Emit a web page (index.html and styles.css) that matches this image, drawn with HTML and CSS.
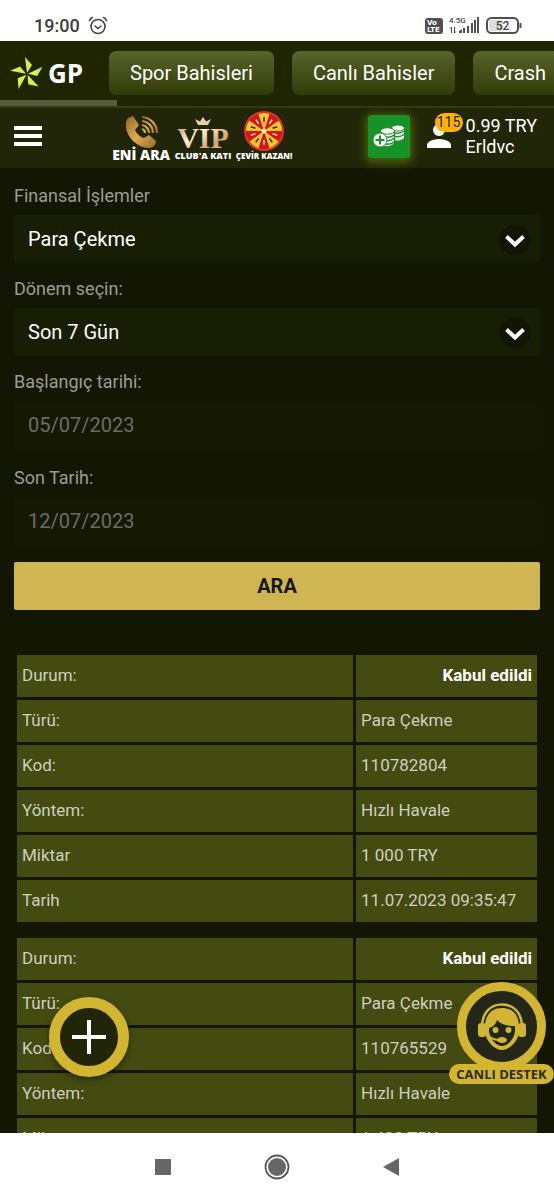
FILE: index.html
```html
<!DOCTYPE html>
<html lang="tr">
<head>
  <meta charset="UTF-8">
  <meta name="viewport" content="width=device-width, initial-scale=1.0">
  <title>Finansal İşlemler</title>
  <link rel="stylesheet" href="styles.css">
</head>
<body>
  <div class="status">
    <span class="clock">19:00</span>
    <svg width="20" height="20" viewBox="0 0 20 20" fill="none" stroke="#444" stroke-width="1.6" stroke-linecap="round">
      <circle cx="10" cy="10.500" r="7"/>
      <path d="M7 10l3 2.500 3-2.500M1.500 4.500C2 3 3 2 4.500 1.500M18.500 4.500C18 3 17 2 15.500 1.500"/>
    </svg>
    <div class="status-right">
      <svg width="18" height="16" viewBox="0 0 18 16">
        <rect width="18" height="16" rx="3" fill="#505050"/>
        <text x="2" y="7" class="volte">Vo</text>
        <text x="2" y="14" class="volte">LTE</text>
      </svg>
      <svg width="31" height="18" viewBox="0 0 31 18">
        <text x="0" y="6" class="net">4.5G</text>
        <path d="M2.500 10v6M1 11.500L2.500 10M5.500 10v6M7 14.500L5.500 16" stroke="#444" fill="none"/>
        <path d="M10 16v-2l3-2v4zM14 11h2v5h-2zM18 9h2v7h-2zM22 6h2v10h-2zM25 3h2v13h-2zM28 0h2v16h-2z" fill="#505050"/>
      </svg>
      <svg width="36" height="17" viewBox="0 0 36 17">
        <rect x="1" y="1" width="31" height="15" rx="4.500" fill="#fff" stroke="#505050" stroke-width="2"/>
        <path d="M5 3h12v11H5a2 2 0 0 1-2-2V5a2 2 0 0 1 2-2z" fill="#ddd"/>
        <path d="M34.500 6v5" stroke="#505050" stroke-width="2"/>
        <text x="16.500" y="13" text-anchor="middle" class="battery">52</text>
      </svg>
    </div>
  </div>

  <header>
    <div class="topbar">
      <a href="#" class="logo">
        <svg width="34" height="34" viewBox="0 0 34 34">
          <defs><path id="blade" d="M17 17L15 1l7 8z"/></defs>
          <g fill="#d8ee4c">
            <use href="#blade"/>
            <use href="#blade" transform="rotate(72 17 18)"/>
            <use href="#blade" transform="rotate(144 17 18)"/>
            <use href="#blade" transform="rotate(216 17 18)"/>
            <use href="#blade" transform="rotate(288 17 18)"/>
          </g>
        </svg>
        <span>GP</span>
      </a>
      <nav class="tabs">
        <a href="#">Spor Bahisleri</a>
        <a href="#">Canlı Bahisler</a>
        <a href="#">Crash</a>
      </nav>
    </div>
    <div class="scrollbar"></div>
    <div class="userbar">
      <button class="menu" aria-label="Menü"><span></span><span></span><span></span></button>
      <div class="promos">
        <a href="#" class="promo promo-call">
          <svg width="34" height="34" viewBox="0 0 34 34">
            <defs><linearGradient id="gold" x1="0" y1="0" x2="1" y2="1"><stop offset="0" stop-color="#8f6427"/><stop offset=".5" stop-color="#e0aa52"/><stop offset="1" stop-color="#96692b"/></linearGradient></defs>
            <path d="M4 3L9 1l6 9-4 5c2 4 5 7 9 8l5-3 7 6c0 4-3 7-7 7C13 33 1 21 2 9c0-3 1-5 2-6z" fill="url(#gold)"/>
            <path d="M18 14a4 4 0 0 1 3 4M18 10a8 8 0 0 1 7 8M18 6a12 12 0 0 1 11 12M18 2a16 16 0 0 1 15 16" fill="none" stroke="url(#gold)" stroke-width="2.200"/>
          </svg>
          <b>ENİ ARA</b>
        </a>
        <a href="#" class="promo promo-vip">
          <svg width="58" height="34" viewBox="0 0 58 34">
            <defs><linearGradient id="vip" x1="0" y1="0" x2="1" y2="1"><stop offset="0" stop-color="#b98b57"/><stop offset=".4" stop-color="#fff0d0"/><stop offset=".7" stop-color="#d0a470"/><stop offset="1" stop-color="#f2d8ac"/></linearGradient></defs>
            <path d="M24 8L21 2l5 2.500L29 0l3 4.500L37 2l-3 6z" fill="#ead0a4"/>
            <text x="29" y="31" text-anchor="middle" class="vip-text" fill="url(#vip)">VIP</text>
          </svg>
          <b>CLUB'A KATI</b>
        </a>
        <a href="#" class="promo promo-wheel">
          <svg width="40" height="40" viewBox="0 0 40 40">
            <defs>
              <path id="slice" d="M20 20L14.400 2.900A18 18 0 0 1 25.600 2.900z"/>
              <path id="mark" d="M20 6v5" stroke="#3a2408" stroke-width="1.500"/>
            </defs>
            <circle cx="20" cy="20" r="20" fill="#d9362b"/>
            <circle cx="20" cy="20" r="18" fill="#d3161c"/>
            <g fill="#f9c62c">
              <use href="#slice"/>
              <use href="#slice" transform="rotate(72 20 20)"/>
              <use href="#slice" transform="rotate(144 20 20)"/>
              <use href="#slice" transform="rotate(216 20 20)"/>
              <use href="#slice" transform="rotate(288 20 20)"/>
            </g>
            <use href="#mark"/><use href="#mark" transform="rotate(72 20 20)"/><use href="#mark" transform="rotate(144 20 20)"/><use href="#mark" transform="rotate(216 20 20)"/><use href="#mark" transform="rotate(288 20 20)"/>
            <g stroke="#ffd9b0" stroke-width="1.500"><path d="M28.200 8.700l-2.900 4M11.800 8.700l2.900 4M33.300 24.300l-4.700-1.500M6.700 24.300l4.700-1.500M20 34v-5"/></g>
            <circle cx="20" cy="20" r="2.500" fill="#fff2b0"/>
          </svg>
          <b>ÇEVİR KAZAN!</b>
        </a>
      </div>
      <button class="deposit" aria-label="Para yatır">
        <svg width="32" height="24" viewBox="0 0 32 24">
          <g fill="#fff">
            <path d="M20 5h11v9c-3 3-8 3-11 2z"/>
            <path d="M8 8h13v11c-3 4-10 4-13 1z"/>
          </g>
          <path d="M8 11c4 3 10 3 13 0M8 14.500c4 3 10 3 13 0M8 18c4 3 10 3 13 0M21 8.500c4 1.500 8 0 10-1.500M21 12c4 1.500 8 0 10-1.500M21.500 7v12" fill="none" stroke="#169226" stroke-width="1.500"/>
          <g fill="#fff" stroke="#169226">
            <ellipse cx="25" cy="4" rx="6.500" ry="3"/>
            <ellipse cx="14.500" cy="7" rx="7" ry="3.200"/>
            <circle cx="7" cy="16" r="7"/>
          </g>
          <path d="M7 11.500v9M2.500 16h9" stroke="#169226" stroke-width="2"/>
        </svg>
      </button>
      <a href="#" class="account">
        <span class="avatar">
          <svg width="24" height="26" viewBox="0 0 24 26" fill="#fff">
            <circle cx="12" cy="7" r="6"/>
            <path d="M0 25v-3c0-4 8-6 12-6s12 2 12 6v3z"/>
          </svg>
          <span class="badge">115</span>
        </span>
        <span class="balance">0.99 TRY<br>Erldvc</span>
      </a>
    </div>
  </header>

  <div class="screen">
    <main>
      <form>
        <div class="field">
          <label for="islem">Finansal İşlemler</label>
          <div class="select">
            <select id="islem"><option>Para Çekme</option></select>
            <svg class="arrow" width="32" height="32" viewBox="0 0 32 32"><circle cx="16" cy="16" r="15.500" fill="#121504"/><path d="M7.500 12.500l8.500 8 8.500-8" fill="none" stroke="#fff" stroke-width="4"/></svg>
          </div>
        </div>
        <div class="field">
          <label for="donem">Dönem seçin:</label>
          <div class="select">
            <select id="donem"><option>Son 7 Gün</option></select>
            <svg class="arrow" width="32" height="32" viewBox="0 0 32 32"><circle cx="16" cy="16" r="15.500" fill="#121504"/><path d="M7.500 12.500l8.500 8 8.500-8" fill="none" stroke="#fff" stroke-width="4"/></svg>
          </div>
        </div>
        <div class="field date">
          <label for="baslangic">Başlangıç tarihi:</label>
          <input type="text" id="baslangic" value="05/07/2023" disabled>
        </div>
        <div class="field date">
          <label for="son">Son Tarih:</label>
          <input type="text" id="son" value="12/07/2023" disabled>
        </div>
        <button type="button" class="search">ARA</button>
      </form>

      <table>
        <tr><td>Durum:</td><td class="state">Kabul edildi</td></tr>
        <tr><td>Türü:</td><td>Para Çekme</td></tr>
        <tr><td>Kod:</td><td>110782804</td></tr>
        <tr><td>Yöntem:</td><td>Hızlı Havale</td></tr>
        <tr><td>Miktar</td><td>1 000 TRY</td></tr>
        <tr><td>Tarih</td><td>11.07.2023 09:35:47</td></tr>
      </table>
      <table>
        <tr><td>Durum:</td><td class="state">Kabul edildi</td></tr>
        <tr><td>Türü:</td><td>Para Çekme</td></tr>
        <tr><td>Kod:</td><td>110765529</td></tr>
        <tr><td>Yöntem:</td><td>Hızlı Havale</td></tr>
        <tr><td>Miktar</td><td>1 400 TRY</td></tr>
      </table>
    </main>

    <button class="plus" aria-label="Ekle">
      <svg width="36" height="36" viewBox="0 0 36 36"><path d="M18 1v34M1 18h34" stroke="#fff" stroke-width="4"/></svg>
    </button>
    <a href="#" class="support">
      <span class="support-face">
        <svg width="48" height="48" viewBox="0 0 48 48">
          <path d="M4 24C4 9 13 1.500 24 1.500S44 9 44 24" fill="none" stroke="#d2b530" stroke-width="2.500"/>
          <path d="M7 22C8 10 15 5 24 5s16 5 17 17v7c-1 10-10 18-17 18S8 39 7 29z" fill="#d2b530"/>
          <path d="M11 25c4-1 7-4 8-8 3 4 10 6 18 6v5c-1 9-8 15-13 15S12 37 11 28z" fill="#232717"/>
          <rect x="0" y="20" width="8" height="14" rx="3" fill="#d2b530"/>
          <rect x="40" y="20" width="8" height="14" rx="3" fill="#d2b530"/>
          <circle cx="17.500" cy="27" r="3" fill="#d2b530"/>
          <circle cx="30.500" cy="27" r="3" fill="#d2b530"/>
          <path d="M9 32c3 3 8 5 13 5" fill="none" stroke="#d2b530" stroke-width="2"/>
          <ellipse cx="24" cy="37" rx="5" ry="3" fill="#d2b530"/>
        </svg>
      </span>
      <span class="support-label">CANLI DESTEK</span>
    </a>
  </div>

  <div class="navbar">
    <svg width="18" height="18" viewBox="0 0 18 18"><rect x="1" y="1" width="16" height="16" fill="#666"/></svg>
    <svg width="26" height="26" viewBox="0 0 26 26"><circle cx="13" cy="13" r="11.500" fill="none" stroke="#555" stroke-width="1.800"/><circle cx="13" cy="13" r="9" fill="#666"/></svg>
    <svg width="18" height="20" viewBox="0 0 18 20"><path d="M1 10L17 1v18z" fill="#666"/></svg>
  </div>
</body>
</html>
```

FILE: styles.css
```css
* {
  box-sizing: border-box;
}

body {
  margin: 0;
  height: 100vh;
  display: flex;
  flex-direction: column;
  overflow: hidden;
  background: #141604;
  color: #fff;
  font-family: Roboto, sans-serif;
}

a {
  color: inherit;
  text-decoration: none;
}

button {
  border: 0;
  padding: 0;
  font-family: inherit;
}

svg {
  display: block;
  flex: none;
}

/* phone status bar */
.status {
  height: 41px;
  flex: none;
  padding: 10px 32px 0 34px;
  display: flex;
  align-items: center;
  gap: 8px;
  background: #fff;
  color: #3c3c3c;
}

.clock {
  font-size: 18px;
  font-weight: 500;
}

.status-right {
  margin-left: auto;
  display: flex;
  align-items: center;
  gap: 6px;
}

.volte {
  font: bold 7px "DejaVu Sans", sans-serif;
  fill: #fff;
}

.net {
  font: 500 8px Roboto, sans-serif;
  fill: #444;
}

.battery {
  font: 500 12px Roboto, sans-serif;
  fill: #444;
}

/* header */
header {
  flex: none;
  background: #202607;
}

.topbar {
  display: flex;
  align-items: center;
  padding: 10px 0 5px;
  overflow: hidden;
  background: #1f2500;
}

.logo {
  flex: none;
  width: 109px;
  padding-left: 10px;
  display: flex;
  align-items: center;
  gap: 4px;
  font: bold 26px/34px "Open Sans", sans-serif;
}

.tabs {
  display: flex;
  gap: 18px;
}

.tabs a {
  flex: none;
  padding: 0 21px;
  border-radius: 7px;
  font-size: 20px;
  line-height: 44px;
  background: linear-gradient(#59642c, #303b06);
}

.scrollbar {
  height: 8px;
  border-bottom: 2px solid #323b09;
  background: linear-gradient(#585b42, #585b42) no-repeat 0 0 / 117px 6px #1f2500;
}

.userbar {
  height: 60px;
  padding: 0 17px 4px 14px;
  display: flex;
  align-items: center;
}

.menu {
  width: 28px;
  display: flex;
  flex-direction: column;
  gap: 4px;
  background: none;
}

.menu span {
  width: 28px;
  height: 4px;
  background: #fff;
}

.promos {
  margin-left: 69px;
  display: flex;
  gap: 1px;
}

.promo {
  width: 60px;
  height: 50px;
  display: flex;
  flex-direction: column;
  align-items: center;
  justify-content: flex-end;
  white-space: nowrap;
  font-family: "Open Sans", sans-serif;
  line-height: 10px;
}

.promo b {
  font-weight: 800;
}

.promo-call b {
  font-size: 14px;
  line-height: 12px;
}

.promo-vip {
  width: 62px;
}

.promo-vip b {
  font-size: 9px;
}

.promo-wheel {
  width: 58px;
}

.promo-wheel b {
  font-size: 8px;
}

.vip-text {
  font: bold 30px "Liberation Serif", serif;
}

.deposit {
  width: 42px;
  height: 43px;
  margin-left: auto;
  display: flex;
  align-items: center;
  justify-content: center;
  border-radius: 3px;
  background: #169226;
  box-shadow: 0 2px 10px 2px #4f6b0c;
}

.account {
  margin-left: 17px;
  display: flex;
  align-items: center;
  gap: 15px;
}

.avatar {
  position: relative;
}

.badge {
  position: absolute;
  left: 8px;
  top: -10px;
  width: 28px;
  border-radius: 10px;
  background: #ffb300;
  color: #222;
  font-size: 14px;
  line-height: 19px;
  text-align: center;
}

.balance {
  font-size: 18px;
  line-height: 21px;
}

/* page */
.screen {
  flex: 1;
  min-height: 0;
  position: relative;
}

main {
  height: 100%;
  padding: 16px 14px 0;
  overflow: hidden;
}

.field {
  margin-bottom: 14px;
}

.field.date {
  margin-bottom: 17px;
}

.field label {
  display: block;
  margin-bottom: 7px;
  color: #9b9c92;
  font-size: 18px;
  line-height: 24px;
}

.select {
  position: relative;
}

.field select,
.field input {
  display: block;
  width: 100%;
  height: 48px;
  padding: 0 14px 1px;
  border: 0;
  border-radius: 2px;
  appearance: none;
  background: #181e04;
  color: #fff;
  font-family: inherit;
  font-size: 20px;
  opacity: 1;
}

.field input {
  background: #151904;
  color: #6c6d62;
}

.arrow {
  position: absolute;
  right: 9px;
  top: 9px;
  pointer-events: none;
}

.search {
  display: block;
  width: 100%;
  height: 48px;
  margin-bottom: 42px;
  border-radius: 2px;
  background: #cfb652;
  color: #141604;
  font-size: 20px;
  font-weight: bold;
}

table {
  width: 100%;
  margin-bottom: 10px;
  border-spacing: 3px;
  table-layout: fixed;
}

td {
  height: 42px;
  padding: 0 5px 2px;
  background: #444b11;
  color: #cdcfbf;
  font-size: 17px;
}

td:first-child {
  width: 65%;
}

td.state {
  color: #fff;
  font-weight: bold;
  text-align: right;
}

/* floating buttons */
.plus {
  position: absolute;
  left: 49px;
  bottom: 56px;
  width: 80px;
  height: 80px;
  display: flex;
  align-items: center;
  justify-content: center;
  border: 11px solid #d2b530;
  border-radius: 50%;
  background: #202607;
  box-shadow: 0 3px 6px rgba(0, 0, 0, 0.4);
}

.support {
  position: absolute;
  right: 0;
  bottom: 49px;
  width: 105px;
  display: flex;
  flex-direction: column;
  align-items: center;
}

.support-face {
  width: 89px;
  height: 89px;
  margin-bottom: -7px;
  display: flex;
  align-items: center;
  justify-content: center;
  border: 9px solid #d2b530;
  border-radius: 50%;
  background: #232717;
}

.support-label {
  width: 100%;
  border-radius: 10px;
  background: #d2b530;
  color: #2c2b10;
  font: bold 13px/20px "Open Sans", sans-serif;
  text-align: center;
}

/* phone buttons */
.navbar {
  height: 67px;
  flex: none;
  display: flex;
  align-items: center;
  justify-content: center;
  gap: 92px;
  background: #fff;
}
```
